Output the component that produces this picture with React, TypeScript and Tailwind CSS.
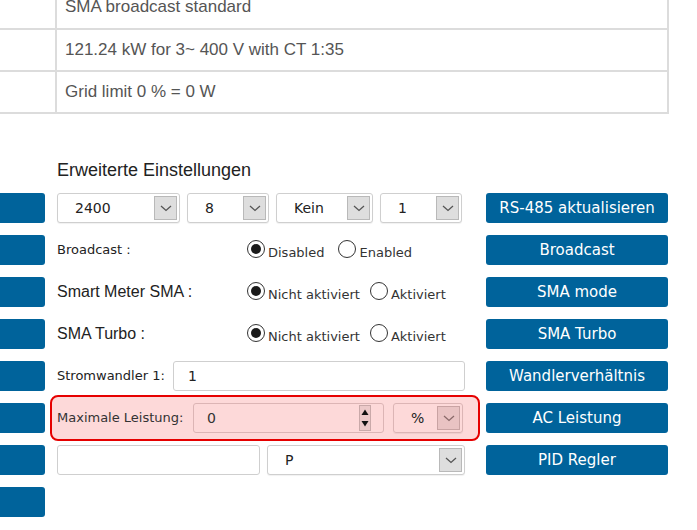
import React from 'react';

// ── Helpers ───────────────────────────────────────────────────────────────────

const TAHOMA = 'font-["DejaVu_Sans","Liberation_Sans",sans-serif]';
const ARIAL = 'font-["Liberation_Sans",Arial,sans-serif]';

function Chevron({ color = '#555' }: { color?: string }) {
  return (
    <svg width="12" height="7" viewBox="0 0 12 7" fill="none">
      <path d="M1 1l5 4.5L11 1" stroke={color} strokeWidth="1.3" />
    </svg>
  );
}

function Select({ value, className = '', tone = 'gray' }: { value: string; className?: string; tone?: 'gray' | 'red' }) {
  const box = tone === 'red' ? 'bg-[#e9c3c3] border-[#c9a3a3]' : 'bg-[#dedede] border-[#b9b9b9]';
  const frame = tone === 'red' ? 'border-[#dcb5b5] bg-transparent' : 'border-[#cfcfcf] bg-white';
  return (
    <div className={`flex h-[30px] items-stretch rounded-[3px] border shadow-[0_1px_1px_rgba(0,0,0,0.06)] ${frame} ${className}`}>
      <span className={`flex-1 pl-[17px] text-[14px] leading-[28px] text-[#222] ${TAHOMA}`}>{value}</span>
      <span className={`m-[2px] flex w-[23px] items-center justify-center border ${box}`}>
        <Chevron color={tone === 'red' ? '#8a6a6a' : '#555'} />
      </span>
    </div>
  );
}

function Radio({ checked, label }: { checked?: boolean; label: string }) {
  return (
    <span className="flex items-start">
      <span className="mt-[1px] flex h-[18px] w-[18px] items-center justify-center rounded-full border-[1.5px] border-[#333] bg-white">
        {checked && <span className="h-[10px] w-[10px] rounded-full bg-[#1a1a1a]" />}
      </span>
      <span className={`ml-[3px] mt-[6px] text-[13px] leading-[16px] text-[#333] ${TAHOMA}`}>{label}</span>
    </span>
  );
}

function BlueButton({ label }: { label?: string }) {
  return (
    <div className={`flex h-[30px] items-center justify-center rounded-[3px] bg-[#00639b] text-[15px] text-white ${TAHOMA}`}>
      {label}
    </div>
  );
}

const TABLE_ROWS = ['SMA broadcast standard', '121.24 kW for 3~ 400 V with CT 1:35', 'Grid limit 0 % = 0 W'];

const RIGHT_BUTTONS = ['RS-485 aktualisieren', 'Broadcast', 'SMA mode', 'SMA Turbo', 'Wandlerverhältnis', 'AC Leistung', 'PID Regler'];

// ── Page ──────────────────────────────────────────────────────────────────────

export default function App() {
  return (
    <div className="h-[530px] w-[697px] overflow-hidden bg-white">
      {/* Summary table */}
      <div className="-mt-[16px] w-[669px] border-2 border-l-0 border-[#dcdcdc]">
        {TABLE_ROWS.map((r, i) => (
          <div key={r} className={`flex h-[42px] ${i > 0 ? 'border-t-2 border-[#dcdcdc]' : ''}`}>
            <div className="w-[57px] shrink-0 border-r-2 border-[#dcdcdc]" />
            <div className={`flex items-center pl-[8px] text-[17px] text-[#555] ${ARIAL}`}>{r}</div>
          </div>
        ))}
      </div>

      {/* Heading */}
      <h2 className={`ml-[57px] mt-[44px] mb-[11px] text-[18px] leading-[24px] text-[#222] ${ARIAL}`}>
        Erweiterte Einstellungen
      </h2>

      <div className="flex gap-[12px]">
        {/* Left button column */}
        <div className="flex w-[45px] flex-col gap-[12px]">
          {Array.from({ length: 8 }).map((_, i) => (
            <div key={i} className="h-[30px] rounded-r-[3px] bg-[#00639b]" />
          ))}
        </div>

        {/* Middle column */}
        <div className="flex w-[408px] flex-col gap-[12px]">
          <div className="flex gap-[7px]">
            <Select value="2400" className="w-[123px]" />
            <Select value="8" className="w-[82px]" />
            <Select value="Kein" className="w-[97px]" />
            <Select value="1" className="w-[82px]" />
          </div>

          <div className="flex h-[30px] items-center">
            <span className={`w-[190px] text-[13px] text-[#222] ${TAHOMA}`}>Broadcast :</span>
            <div className="flex gap-[14px]">
              <Radio checked label="Disabled" />
              <Radio label="Enabled" />
            </div>
          </div>

          <div className="flex h-[30px] items-center">
            <span className={`w-[190px] text-[16px] text-[#222] ${ARIAL}`}>Smart Meter SMA :</span>
            <div className="flex gap-[10px]">
              <Radio checked label="Nicht aktiviert" />
              <Radio label="Aktiviert" />
            </div>
          </div>

          <div className="flex h-[30px] items-center">
            <span className={`w-[190px] text-[16px] text-[#222] ${ARIAL}`}>SMA Turbo :</span>
            <div className="flex gap-[10px]">
              <Radio checked label="Nicht aktiviert" />
              <Radio label="Aktiviert" />
            </div>
          </div>

          <div className="flex h-[30px] items-center">
            <span className={`w-[116px] text-[13px] text-[#222] ${TAHOMA}`}>Stromwandler 1:</span>
            <div className={`flex h-[30px] flex-1 items-center rounded-[3px] border border-[#cfcfcf] pl-[14px] text-[14px] text-[#222] ${TAHOMA}`}>
              1
            </div>
          </div>

          {/* Highlighted row */}
          <div className="-mx-[7px] -my-[8px] mr-[-15px] flex h-[46px] items-center rounded-[8px] border-2 border-[#e60000] bg-[#fdd9d9] pl-[5px] pr-[15px]">
            <span className={`w-[136px] text-[13px] text-[#333] ${TAHOMA}`}>Maximale Leistung:</span>
            <div className="flex h-[30px] w-[191px] items-center rounded-[3px] border border-[#dcb5b5] pl-[13px] pr-[12px]">
              <span className={`flex-1 text-[14px] text-[#333] ${TAHOMA}`}>0</span>
              <span className="flex h-[26px] w-[12px] flex-col border border-[#c9a9a9] bg-[#ecc9c9]">
                <svg width="10" height="12" viewBox="0 0 10 12"><path d="M1.5 9L5 3.5L8.5 9z" fill="#111" /></svg>
                <svg width="10" height="12" viewBox="0 0 10 12"><path d="M1.5 3L5 8.5L8.5 3z" fill="#111" /></svg>
              </span>
            </div>
            <Select value="%" tone="red" className="ml-[9px] w-[70px]" />
          </div>

          <div className="flex gap-[7px]">
            <div className="h-[30px] w-[203px] rounded-[3px] border border-[#cfcfcf]" />
            <Select value="P" className="flex-1" />
          </div>
        </div>

        {/* Right button column */}
        <div className="ml-[9px] flex w-[182px] flex-col gap-[12px]">
          {RIGHT_BUTTONS.map((b) => (
            <BlueButton key={b} label={b} />
          ))}
        </div>
      </div>
    </div>
  );
}
